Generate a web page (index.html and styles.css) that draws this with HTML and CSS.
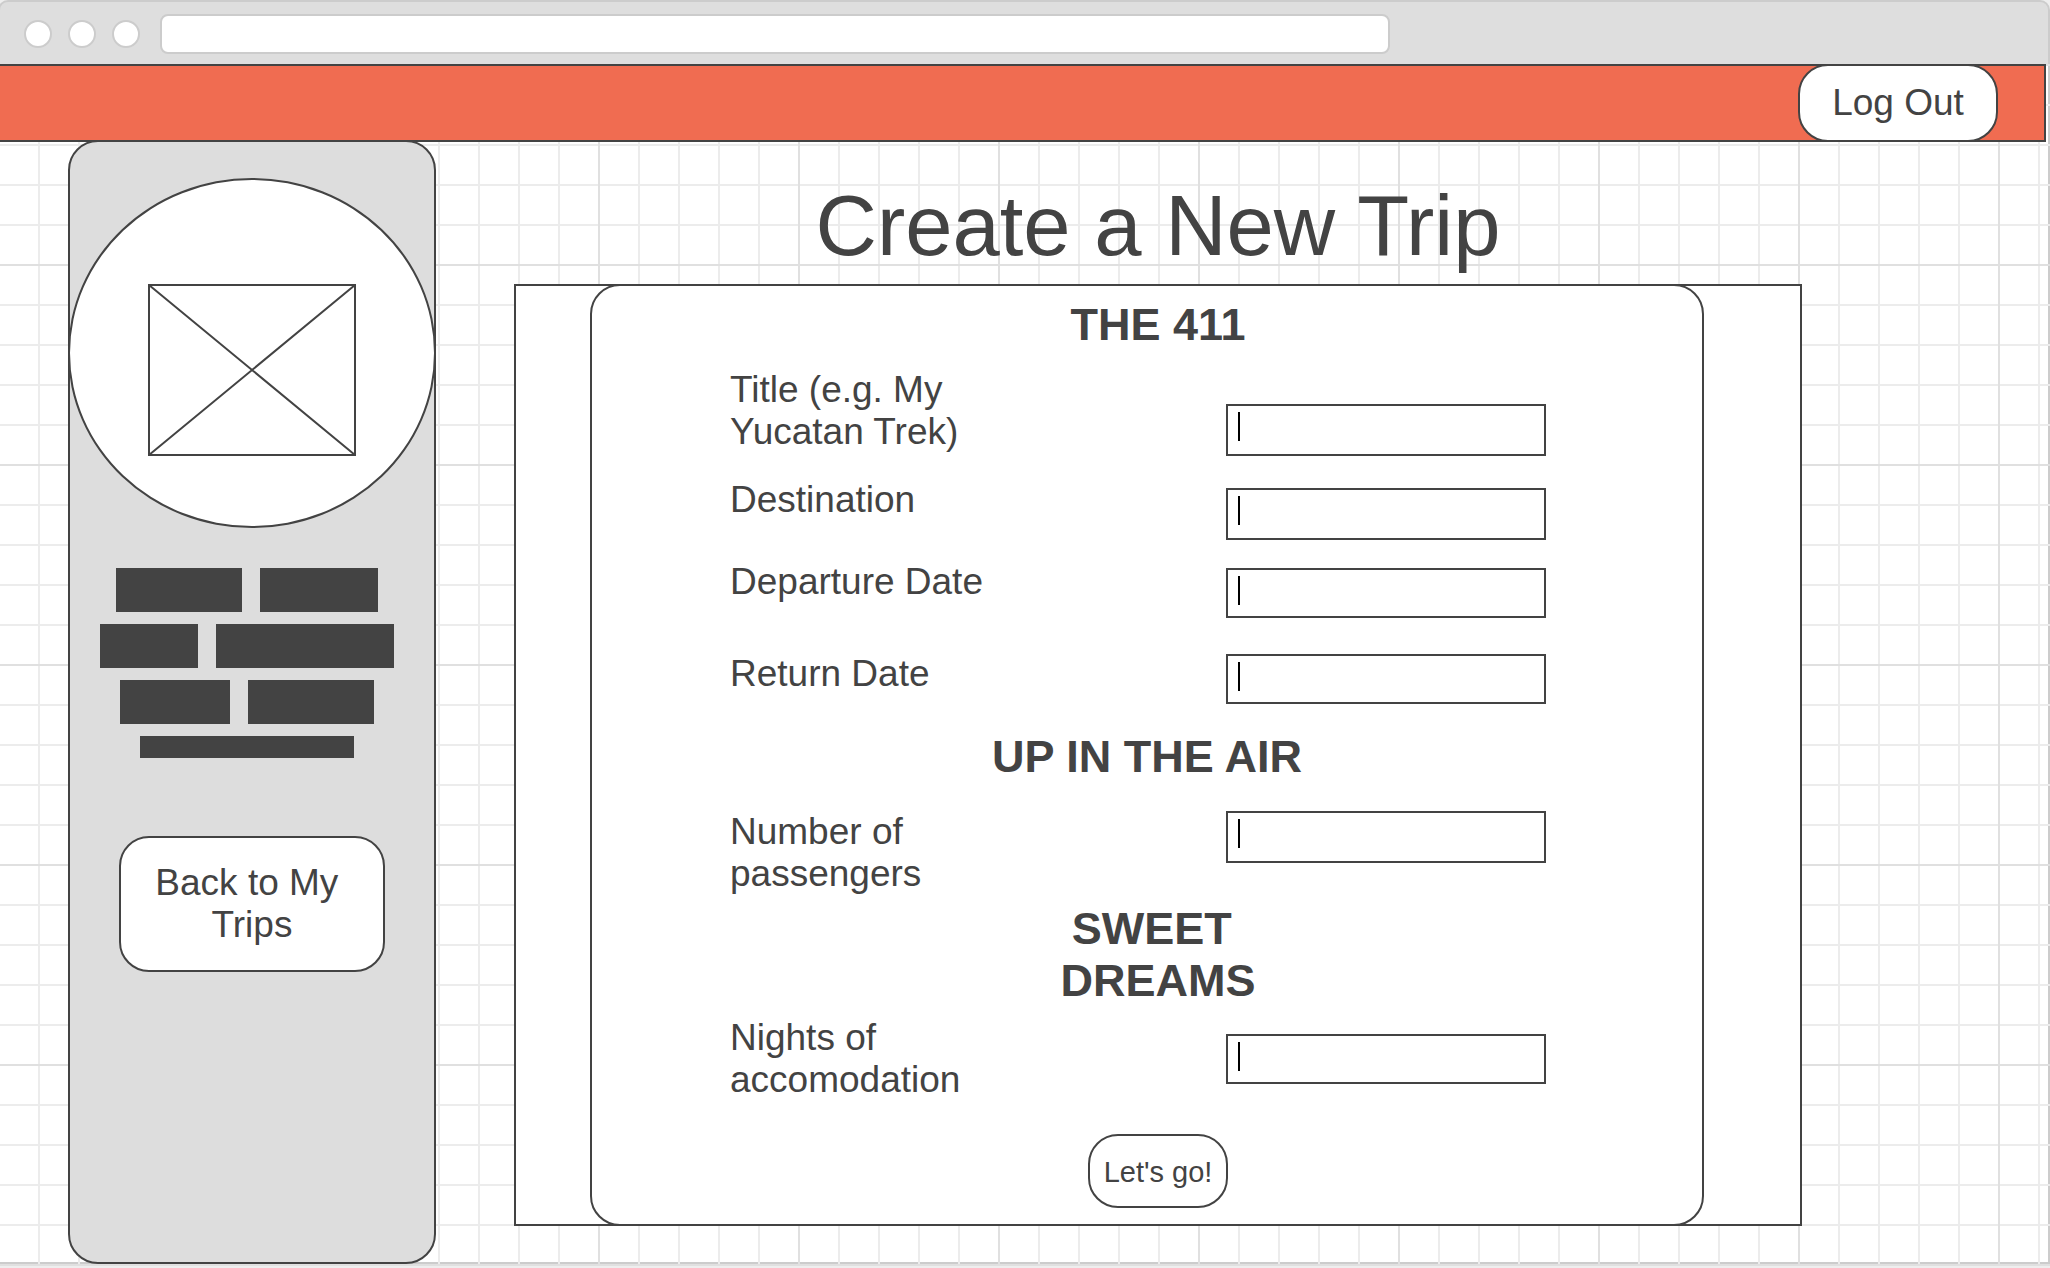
FILE: index.html
```html
<!DOCTYPE html>
<html lang="en">
<head>
<meta charset="utf-8">
<meta name="viewport" content="width=device-width, initial-scale=1">
<title>Create a New Trip</title>
<link rel="stylesheet" href="styles.css">
</head>
<body>
<div class="chrome">
  <span class="chrome-dot"></span>
  <span class="chrome-dot"></span>
  <span class="chrome-dot"></span>
  <input class="chrome-address" type="text" aria-label="Address">
</div>
<div class="canvas">
  <header class="topbar">
    <button class="btn btn-logout" type="button">Log Out</button>
  </header>
  <div class="layout">
    <aside class="sidebar">
      <div class="avatar">
        <svg class="avatar-image" viewBox="0 0 208 172" aria-hidden="true">
          <rect x="1" y="1" width="206" height="170"/>
          <path d="M1 1L207 171M207 1L1 171"/>
        </svg>
      </div>
      <div class="bio">
        <div class="bio-row"><span style="width:126px"></span><span style="width:118px"></span></div>
        <div class="bio-row"><span style="width:98px"></span><span style="width:178px"></span></div>
        <div class="bio-row"><span style="width:110px"></span><span style="width:126px"></span></div>
        <div class="bio-row bio-row-short"><span style="width:214px"></span></div>
      </div>
      <button class="btn btn-back" type="button">Back to My&nbsp;<br>Trips</button>
    </aside>
    <main class="content">
      <h1 class="page-title">Create a New Trip</h1>
      <div class="panel">
        <form class="trip-form">
          <h2 class="section-title section-title-inset">THE 411</h2>
          <div class="field field-title">
            <label for="title">Title (e.g. My Yucatan Trek)</label>
            <input class="input-tall" id="title" type="text">
          </div>
          <div class="field field-destination">
            <label for="destination">Destination</label>
            <input class="input-tall" id="destination" type="text">
          </div>
          <div class="field field-departure">
            <label for="departure">Departure Date</label>
            <input id="departure" type="text">
          </div>
          <div class="field field-return">
            <label for="return">Return Date</label>
            <input id="return" type="text">
          </div>
          <h2 class="section-title section-title-air">UP IN THE AIR</h2>
          <div class="field field-passengers">
            <label for="passengers">Number of passengers</label>
            <input class="input-tall" id="passengers" type="text">
          </div>
          <h2 class="section-title section-title-inset section-title-sleep">SWEET&nbsp;<br>DREAMS</h2>
          <div class="field field-nights">
            <label for="nights">Nights of accomodation</label>
            <input id="nights" type="text">
          </div>
          <div class="form-actions">
            <button class="btn btn-submit" type="submit">Let's go!</button>
          </div>
        </form>
      </div>
    </main>
  </div>
</div>
</body>
</html>
```
FILE: styles.css
```css
:root {
  --ink: #434343;
  --frame: #cccccc;
  --grey: #dddddd;
  --accent: #f06c51;
  --grid-minor: #ececec;
  --grid-major: #e0e0e0;
}

* {
  box-sizing: border-box;
}

body {
  margin: 0;
  padding-bottom: 4px;
  background: #eeeeee;
  color: var(--ink);
  font-family: "Liberation Sans", Arial, sans-serif;
  font-size: 37px;
  line-height: 42px;
  overflow-x: hidden;
}

/* Browser bar */
.chrome {
  display: flex;
  align-items: center;
  gap: 16px;
  height: 66px;
  margin: 0 0 -2px -2px;
  padding: 2px 24px 0;
  border: 2px solid var(--frame);
  border-radius: 10px 10px 0 0;
  background: #dedede;
}

.chrome-dot {
  width: 28px;
  height: 28px;
  border: 2px solid var(--frame);
  border-radius: 50%;
  background: #fff;
}

.chrome-address {
  width: 60vw;
  height: 40px;
  margin: 0 0 0 4px;
  padding: 0 12px;
  border: 2px solid var(--frame);
  border-radius: 8px;
  background: #fff;
  font: 20px "Liberation Sans", Arial, sans-serif;
}

/* Graph paper area */
.canvas {
  position: relative;
  border: solid var(--frame);
  border-width: 0 2px 2px 0;
  background: #fff;
}

.canvas::before {
  content: "";
  position: absolute;
  inset: 0 -2px -4px 0;
  background:
    linear-gradient(var(--grid-major) 2px, transparent 2px) 0 0 / 200px 200px,
    linear-gradient(90deg, var(--grid-major) 2px, transparent 2px) -2px 0 / 200px 200px,
    linear-gradient(var(--grid-minor) 2px, transparent 2px) 0 0 / 40px 40px,
    linear-gradient(90deg, var(--grid-minor) 2px, transparent 2px) -2px 0 / 40px 40px;
}

.topbar {
  position: relative;
  z-index: 1;
  display: flex;
  justify-content: flex-end;
  height: 78px;
  margin-right: 2px;
  padding-right: 46px;
  border: solid var(--ink);
  border-width: 2px 2px 2px 0;
  background: var(--accent);
}

.btn {
  padding: 0;
  border: 2px solid var(--ink);
  border-radius: 30px;
  background: #fff;
  color: inherit;
  font: inherit;
}

.btn-logout {
  width: 200px;
  margin: -2px 0;
}

.layout {
  position: relative;
  display: flex;
  gap: 78px;
  margin: -2px 0;
  padding: 0 246px 0 68px;
}

/* Profile column */
.sidebar {
  flex: none;
  display: flex;
  flex-direction: column;
  align-items: center;
  width: 368px;
  padding-top: 36px;
  border: 2px solid var(--ink);
  border-radius: 30px;
  background: var(--grey);
}

.avatar {
  display: flex;
  justify-content: center;
  align-items: flex-start;
  width: 368px;
  height: 350px;
  padding-top: 104px;
  border: 2px solid var(--ink);
  border-radius: 50%;
  background: #fff;
}

.avatar-image {
  width: 208px;
  height: 172px;
  fill: none;
  stroke: var(--ink);
  stroke-width: 2;
}

.bio {
  display: flex;
  flex-direction: column;
  gap: 12px;
  margin: 40px 10px 78px 0;
}

.bio-row {
  display: flex;
  justify-content: center;
  gap: 18px;
  height: 44px;
}

.bio-row span {
  background: var(--ink);
}

.bio-row-short {
  height: 22px;
}

.btn-back {
  width: 266px;
  height: 136px;
}

/* Trip form */
.content {
  flex: 1;
  min-width: 0;
  padding: 38px 0;
}

.page-title {
  margin: 0 0 10px;
  font-size: 85px;
  font-weight: 400;
  line-height: 96px;
  text-align: center;
}

.panel {
  border: 2px solid var(--ink);
  background: #fff;
}

.trip-form {
  margin: -2px 96px -2px 74px;
  padding: 13px 0 16px;
  border: 2px solid var(--ink);
  border-radius: 30px;
}

.section-title {
  margin: 0;
  font-size: 45px;
  font-weight: 700;
  line-height: 52px;
  text-align: center;
}

.section-title-inset,
.form-actions {
  padding-left: 22px;
}

.section-title-air {
  margin-top: 27px;
}

.section-title-sleep {
  margin-top: 8px;
}

.field {
  display: flex;
  justify-content: space-between;
  margin: 0 156px 0 138px;
}

.field label {
  width: 260px;
}

.field input {
  align-self: flex-end;
  width: 320px;
  height: 50px;
  margin: 0;
  padding: 0 16px;
  border: 2px solid var(--ink);
  border-radius: 0;
  background: linear-gradient(#000, #000) 10px 6px / 2px 29px no-repeat #fff;
  color: inherit;
  font: 28px "Liberation Sans", Arial, sans-serif;
}

.field .input-tall {
  height: 52px;
}

.field-title {
  min-height: 87px;
  margin-top: 18px;
}

.field-destination {
  min-height: 61px;
  margin-top: 23px;
}

.field-departure {
  min-height: 57px;
  margin-top: 21px;
}

.field-return {
  min-height: 51px;
  margin-top: 35px;
}

.field-passengers {
  margin-top: 28px;
}

.field-passengers input {
  align-self: flex-start;
}

.field-nights {
  margin-top: 10px;
}

.field-nights input {
  align-self: center;
}

.form-actions {
  display: flex;
  justify-content: center;
  margin-top: 33px;
}

.btn-submit {
  width: 140px;
  height: 74px;
  padding: 2px 0 0;
  font-size: 29px;
}
```
